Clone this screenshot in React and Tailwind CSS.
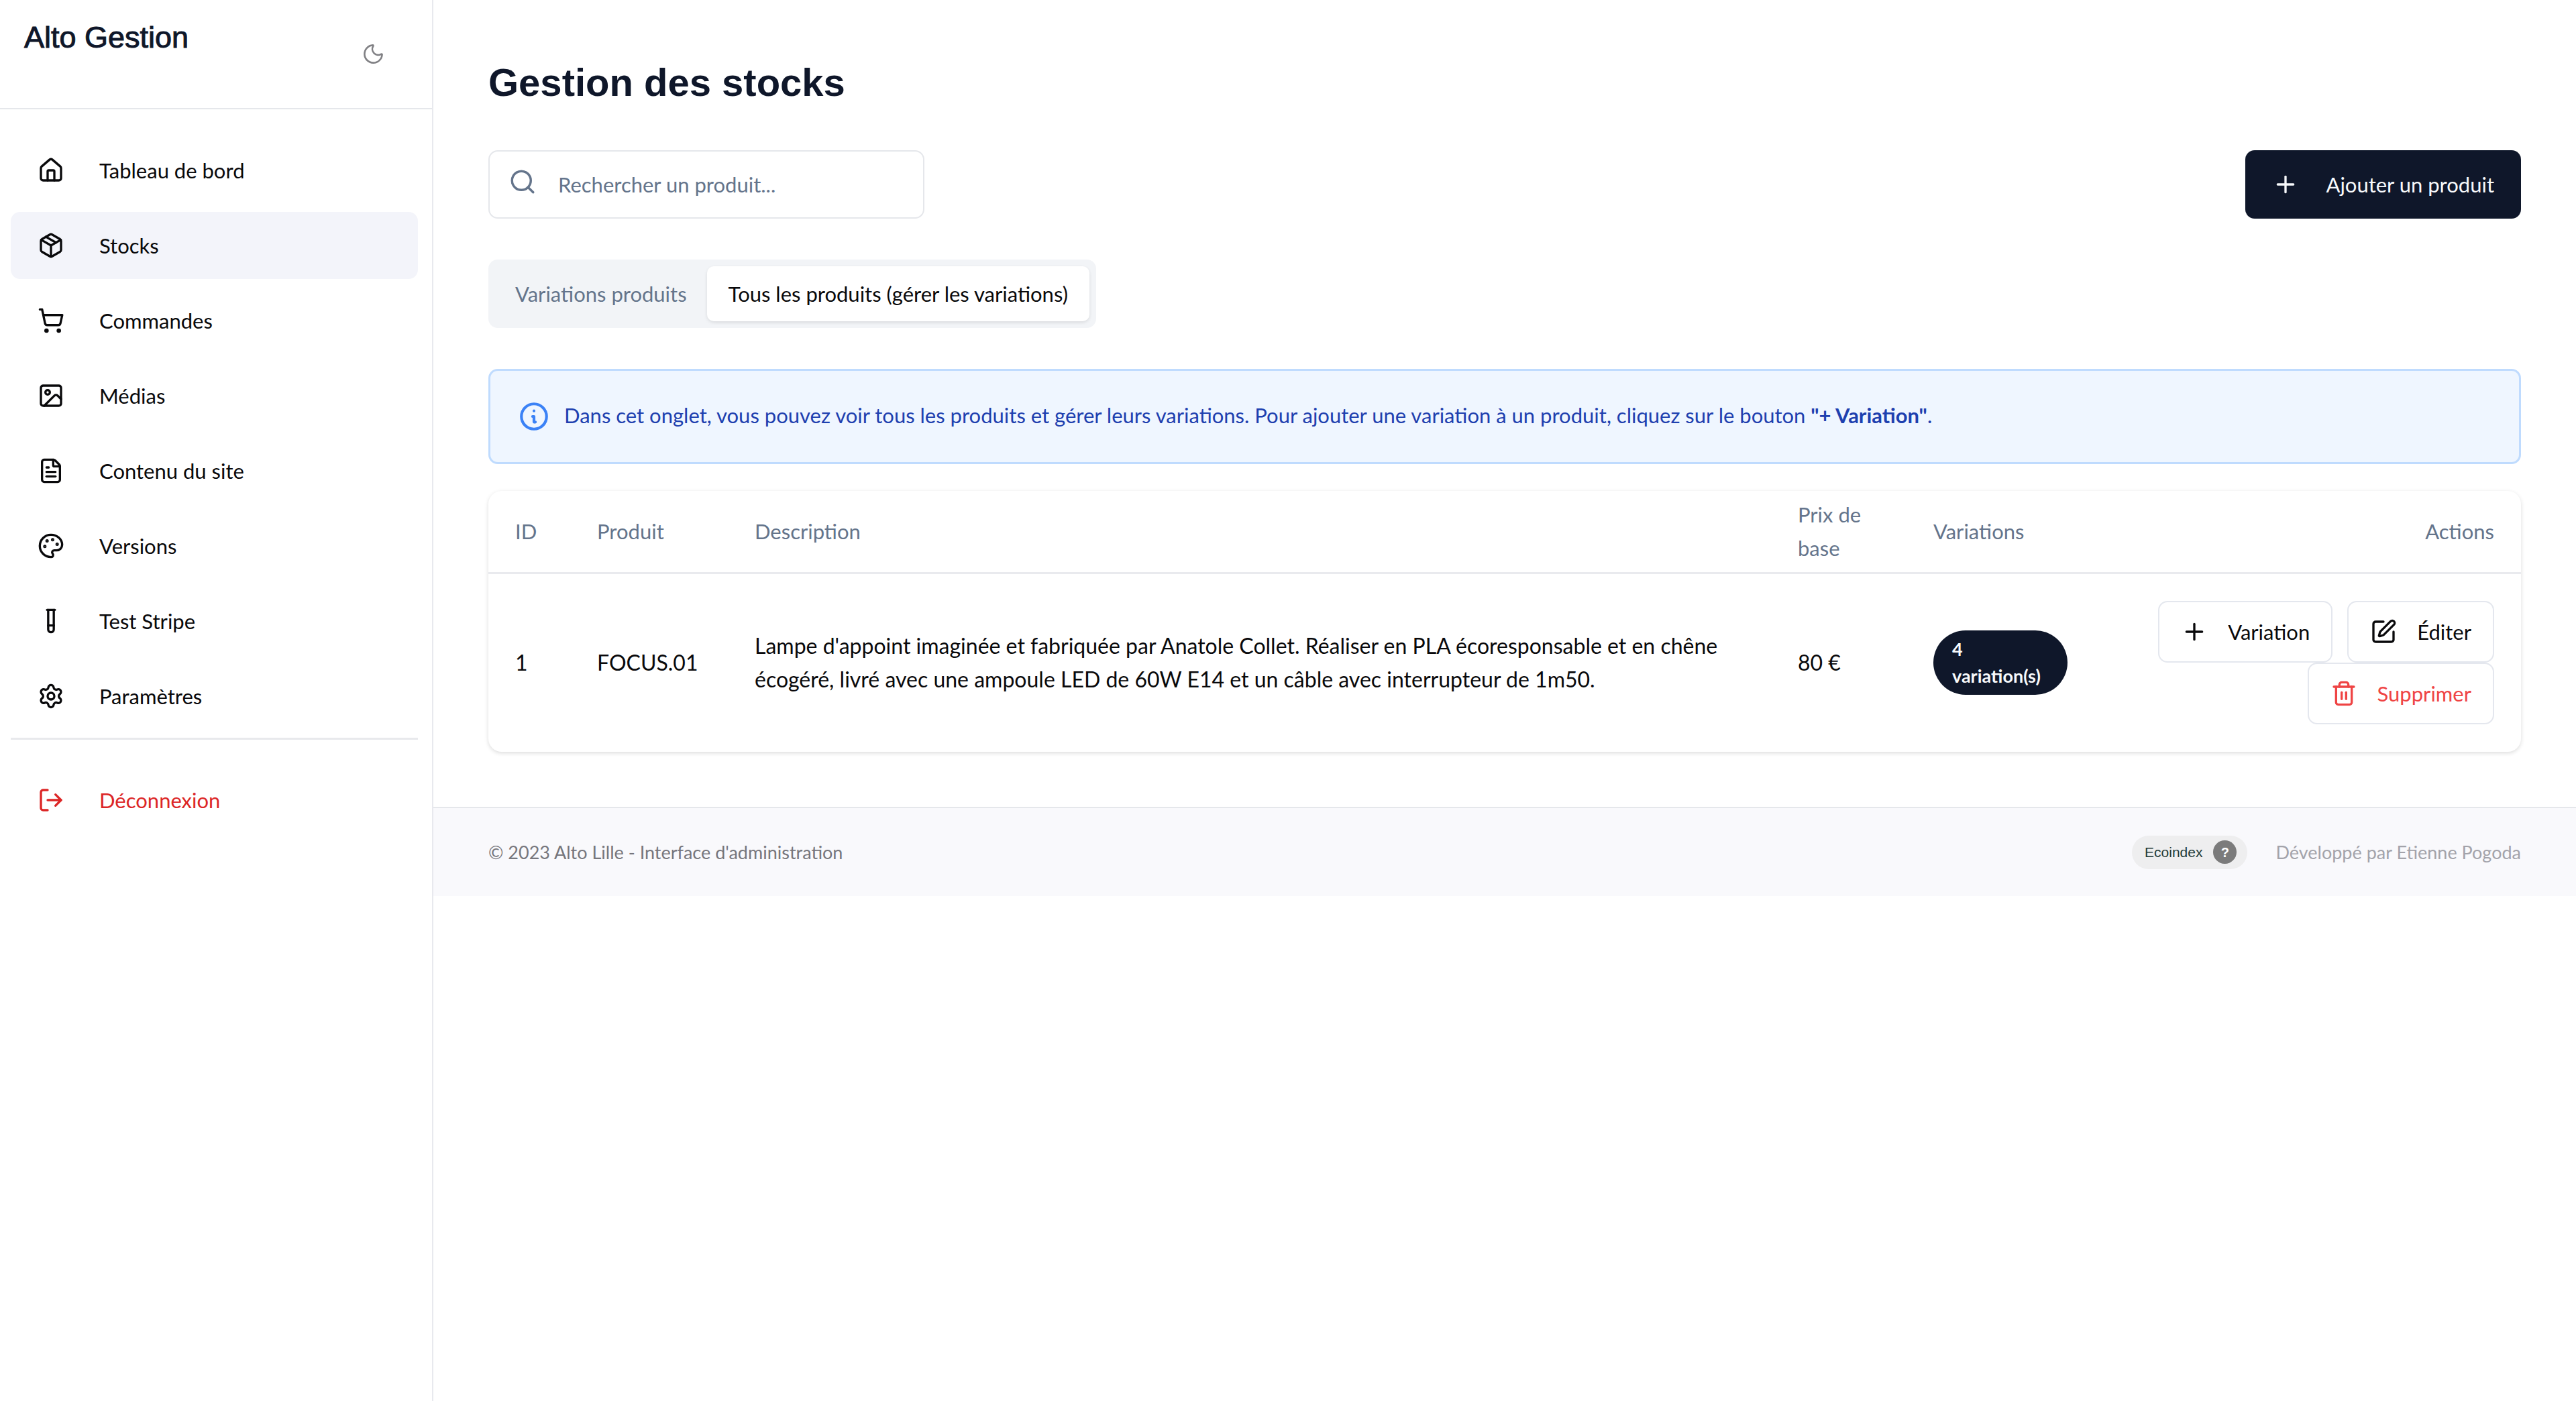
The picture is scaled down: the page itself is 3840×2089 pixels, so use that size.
import {
  House, Package, ShoppingCart, Image, FileText, Palette, TestTube, Settings,
  LogOut, Moon, Search, Plus, SquarePen, Trash2,
} from "lucide-react";

const NAV = [
  { label: "Tableau de bord", icon: House },
  { label: "Stocks", icon: Package, active: true },
  { label: "Commandes", icon: ShoppingCart },
  { label: "Médias", icon: Image },
  { label: "Contenu du site", icon: FileText },
  { label: "Versions", icon: Palette },
  { label: "Test Stripe", icon: TestTube },
  { label: "Paramètres", icon: Settings },
];

function NavItem({ label, icon: Icon, active }) {
  return (
    <a
      href="#"
      aria-current={active ? "page" : undefined}
      className={`flex h-[100px] items-center gap-[52px] rounded-[14px] px-10 ${active ? "bg-[#f3f4fa]" : ""}`}
    >
      <Icon className="size-10 shrink-0" />
      {label}
    </a>
  );
}

function Sidebar() {
  return (
    <aside className="flex w-[646px] shrink-0 flex-col border-r-2 border-[#e8e9ee]">
      <div className="flex h-[163px] items-start justify-between border-b-2 border-[#e5e7eb] pl-9 pr-[70px]">
        <span className="pt-[26px] font-['Liberation_Sans',sans-serif] text-[45px] leading-[60px] text-[#0f172a] [-webkit-text-stroke:1px_#0f172a]">
          Alto Gestion
        </span>
        <button type="button" aria-label="Mode sombre" className="mt-[63px]">
          <Moon className="size-[35px] text-[#808084]" strokeWidth={1.8} />
        </button>
      </div>
      <nav className="flex flex-col gap-3 pl-4 pr-[21px] pt-[41px]">
        {NAV.map((item) => (
          <NavItem key={item.label} {...item} />
        ))}
        <div className="border-t-[3px] border-[#e8e9ec] pt-10">
          <a href="#" className="flex h-[100px] items-center gap-[52px] px-10 text-[#dc2626]">
            <LogOut className="size-10 shrink-0" />
            Déconnexion
          </a>
        </div>
      </nav>
    </aside>
  );
}

function InfoIcon() {
  return (
    <svg
      viewBox="0 0 24 24"
      fill="none"
      stroke="currentColor"
      strokeWidth="2"
      strokeLinecap="round"
      strokeLinejoin="round"
      aria-hidden="true"
      className="size-[50px] shrink-0 text-[#3b82f6]"
    >
      <path d="M13 16h-1v-4h-1m1-4h.01M21 12a9 9 0 11-18 0 9 9 0 0118 0z" />
    </svg>
  );
}

function ActionButton({ icon: Icon, label, danger }) {
  return (
    <button
      type="button"
      className={`flex h-[92px] items-center gap-[30px] rounded-[14px] border-2 border-[#e4e7ee] px-8 text-[31px] ${danger ? "text-[#ef4444]" : ""}`}
    >
      <Icon className="size-10 shrink-0" />
      {label}
    </button>
  );
}

function ProductTable() {
  return (
    <div className="mt-10 overflow-hidden rounded-[20px] shadow-[0_2px_6px_rgba(0,0,0,0.14)]">
      <table className="w-full table-fixed text-left leading-[50px]">
        <colgroup>
          <col className="w-[122px]" />
          <col className="w-[235px]" />
          <col />
          <col className="w-[202px]" />
          <col className="w-[280px]" />
          <col className="w-[636px]" />
        </colgroup>
        <thead>
          <tr className="h-[122px] border-b-[3px] border-[#e9eaee] text-[#64748b]">
            <th className="px-10 font-normal">ID</th>
            <th className="px-10 font-normal">Produit</th>
            <th className="px-10 font-normal">Description</th>
            <th className="px-10 font-normal">Prix de base</th>
            <th className="px-10 font-normal">Variations</th>
            <th className="px-10 text-right font-normal">Actions</th>
          </tr>
        </thead>
        <tbody>
          <tr className="h-[267px] text-[32px]">
            <td className="px-10">1</td>
            <td className="whitespace-nowrap pl-10">FOCUS.01</td>
            <td className="px-10">
              Lampe d'appoint imaginée et fabriquée par Anatole Collet. Réaliser en PLA écoresponsable et en chêne
              écogéré, livré avec une ampoule LED de 60W E14 et un câble avec interrupteur de 1m50.
            </td>
            <td className="whitespace-nowrap pl-10">80 €</td>
            <td className="px-10">
              <span className="block rounded-full bg-[#0f172a] px-7 py-2 text-[27px] font-bold leading-10 text-[#f8fafc]">
                4 variation(s)
              </span>
            </td>
            <td className="px-10">
              <div className="flex flex-wrap justify-end gap-x-[22px]">
                <ActionButton icon={Plus} label="Variation" />
                <ActionButton icon={SquarePen} label="Éditer" />
                <ActionButton icon={Trash2} label="Supprimer" danger />
              </div>
            </td>
          </tr>
        </tbody>
      </table>
    </div>
  );
}

function Footer() {
  return (
    <footer className="flex h-[133px] items-center justify-between border-t-2 border-[#e5e7eb] bg-[#f9f9fc] px-[82px] text-[27px] leading-10 text-[#76767c]">
      <span>© 2023 Alto Lille - Interface d'administration</span>
      <div className="flex items-center gap-[42px]">
        <span className="flex h-[50px] items-center gap-4 rounded-full bg-[#eeeeef] pl-[19px] pr-4 font-['Liberation_Sans',sans-serif] text-[21px] text-[#1f3a37]">
          Ecoindex
          <span className="flex size-[35px] items-center justify-center rounded-full bg-[#7b7b7b] text-[20px] font-bold text-white">
            ?
          </span>
        </span>
        <span className="text-[#a3a3aa]">Développé par Etienne Pogoda</span>
      </div>
    </footer>
  );
}

export default function App() {
  return (
    <div className="flex min-h-screen bg-white font-['Lato',sans-serif] text-[31px] leading-[50px] text-[#09090b]">
      <Sidebar />
      <div className="min-w-0 flex-1">
        <main className="px-[82px] pb-[82px] pt-[82px]">
          <h1 className="font-['Liberation_Sans',sans-serif] text-[58px] font-bold leading-[82px] text-[#0f172a]">
            Gestion des stocks
          </h1>
          <div className="mt-[60px] flex items-center justify-between">
            <label className="flex h-[102px] w-[650px] items-center gap-8 rounded-[14px] border-2 border-[#e5e7eb] px-7">
              <Search className="mb-2 size-[42px] shrink-0 text-[#64748b]" />
              <input
                type="text"
                aria-label="Rechercher un produit"
                placeholder="Rechercher un produit..."
                className="min-w-0 flex-1 outline-none placeholder:text-[#64748b]"
              />
            </label>
            <button type="button" className="flex h-[102px] items-center gap-10 rounded-[14px] bg-[#0f172a] px-10 text-[#f8fafc]">
              <Plus className="size-10" />
              Ajouter un produit
            </button>
          </div>
          <div role="tablist" className="mt-[61px] inline-flex h-[102px] items-center rounded-[14px] bg-[#f2f4f7] p-[10px]">
            <button type="button" role="tab" aria-selected="false" className="h-full px-[30px] text-[#64748b]">
              Variations produits
            </button>
            <button type="button" role="tab" aria-selected="true" className="h-full rounded-[10px] bg-white px-8 shadow-[0_2px_5px_rgba(0,0,0,0.1)]">
              Tous les produits (gérer les variations)
            </button>
          </div>
          <div role="status" className="mt-[61px] flex h-[142px] items-center gap-5 rounded-[14px] border-[3px] border-[#bfdbfe] bg-[#eff6ff] px-10 text-[#1e40af]">
            <InfoIcon />
            <p className="pb-1">
              Dans cet onglet, vous pouvez voir tous les produits et gérer leurs variations. Pour ajouter une variation à un produit, cliquez sur le bouton{" "}
              <strong>"+ Variation"</strong>.
            </p>
          </div>
          <ProductTable />
        </main>
        <Footer />
      </div>
    </div>
  );
}
